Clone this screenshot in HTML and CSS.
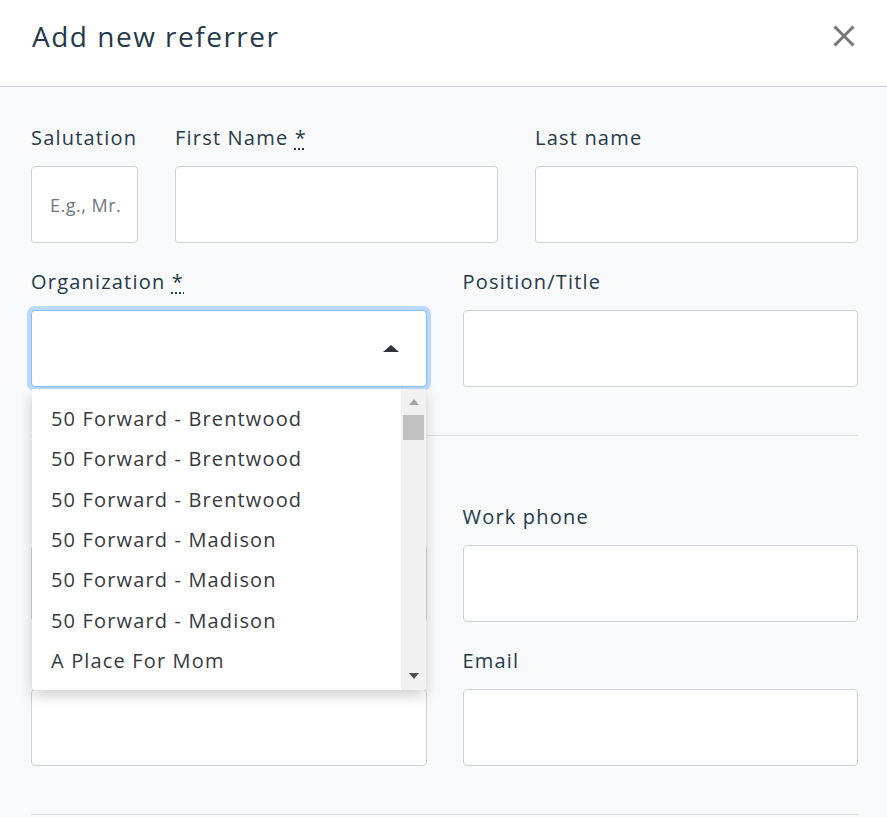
FILE: index.html
```html
<!DOCTYPE html>
<html lang="en">
<head>
    <meta charset="UTF-8">
    <meta name="viewport" content="width=device-width, initial-scale=1.0">
    <title>Add new referrer</title>
    <link rel="stylesheet" href="styles.css">
</head>
<body>
    <div class="modal">
        <header class="modal-header">
            <h1 class="modal-title">Add new referrer</h1>
            <button class="modal-close" type="button" aria-label="Close">
                <svg width="24" height="24" viewBox="0 0 24 24">
                    <path d="M2.5 2.5 L21.5 21.5 M21.5 2.5 L2.5 21.5" stroke="#767676" stroke-width="3" fill="none"/>
                </svg>
            </button>
        </header>

        <form class="modal-body">
            <div class="form-section">
                <div class="form-row row-name">
                    <div class="field">
                        <label>Salutation</label>
                        <div class="input"><span class="placeholder">E.g., Mr.</span></div>
                    </div>
                    <div class="field">
                        <label>First Name <abbr title="required">*</abbr></label>
                        <div class="input"></div>
                    </div>
                    <div class="field">
                        <label>Last name</label>
                        <div class="input"></div>
                    </div>
                </div>

                <div class="form-row row-half">
                    <div class="field">
                        <label>Organization <abbr title="required">*</abbr></label>
                        <div class="select-wrap">
                            <div class="input select is-open">
                                <span class="caret"></span>
                            </div>
                            <div class="dropdown">
                                <ul class="dropdown-list">
                                    <li>50 Forward - Brentwood</li>
                                    <li>50 Forward - Brentwood</li>
                                    <li>50 Forward - Brentwood</li>
                                    <li>50 Forward - Madison</li>
                                    <li>50 Forward - Madison</li>
                                    <li>50 Forward - Madison</li>
                                    <li>A Place For Mom</li>
                                </ul>
                                <div class="scrollbar">
                                    <span class="arrow arrow-up"></span>
                                    <span class="thumb"></span>
                                    <span class="arrow arrow-down"></span>
                                </div>
                            </div>
                        </div>
                    </div>
                    <div class="field">
                        <label>Position/Title</label>
                        <div class="input"></div>
                    </div>
                </div>
            </div>

            <hr class="divider">

            <div class="form-section section-contact">
                <div class="form-row row-half">
                    <div class="field">
                        <label>Mobile phone</label>
                        <div class="input"></div>
                    </div>
                    <div class="field">
                        <label>Work phone</label>
                        <div class="input"></div>
                    </div>
                </div>
                <div class="form-row row-half">
                    <div class="field">
                        <label>Fax</label>
                        <div class="input"></div>
                    </div>
                    <div class="field">
                        <label>Email</label>
                        <div class="input"></div>
                    </div>
                </div>
            </div>

            <hr class="divider">
        </form>
    </div>
</body>
</html>
```

FILE: styles.css
```css
:root {
    --color-text: #263a49;
    --color-item: #363a3e;
    --color-border: #ced2d8;
    --color-divider: #dde0e5;
    --color-bg: #f8f9fb;
    --color-focus: #86bcf7;
}

* {
    box-sizing: border-box;
}

body {
    margin: 0;
    font-family: "Open Sans", "Noto Sans", sans-serif;
    color: var(--color-text);
    background: var(--color-bg);
}

.modal {
    width: 887px;
    min-height: 817px;
    background: var(--color-bg);
}

/* Header */
.modal-header {
    height: 87px;
    display: flex;
    align-items: flex-start;
    justify-content: space-between;
    padding: 14px 31px 0 32px;
    background: #fff;
    border-bottom: 1px solid #c7cad8;
}

.modal-title {
    margin: 0;
    font-size: 28px;
    font-weight: 400;
    line-height: 44px;
    letter-spacing: 1.5px;
    color: var(--color-text);
}

.modal-close {
    margin-top: 10px;
    padding: 0;
    border: none;
    background: none;
    width: 24px;
    height: 24px;
    cursor: pointer;
}

/* Body */
.modal-body {
    padding: 38px 29px 0 31px;
}

.form-section {
    display: flex;
    flex-direction: column;
    gap: 26px;
}

.form-row {
    display: grid;
    column-gap: 36px;
}

.row-name {
    grid-template-columns: 107px 1fr 1fr;
    column-gap: 37px;
}

.row-half {
    grid-template-columns: 1fr 1fr;
}

.field label {
    display: block;
    font-size: 20px;
    line-height: 26px;
    letter-spacing: 1.2px;
    margin-bottom: 15px;
    white-space: nowrap;
}

.field abbr {
    text-decoration: underline dotted;
    text-underline-offset: 3px;
    cursor: help;
}

.input {
    height: 77px;
    background: #fff;
    border: 1px solid var(--color-border);
    border-radius: 4px;
    display: flex;
    align-items: center;
    padding: 0 18px;
}

.placeholder {
    font-size: 18px;
    letter-spacing: 0.5px;
    color: #6f7680;
    white-space: nowrap;
}

.divider {
    margin: 48px 0 0;
    border: none;
    border-top: 1px solid var(--color-divider);
}

.section-contact {
    padding-top: 68px;
}

.section-contact + .divider {
    margin-top: 48px;
}

/* Organization select */
.select-wrap {
    position: relative;
}

.select {
    justify-content: flex-end;
    padding-right: 27px;
}

.select.is-open {
    border-color: var(--color-focus);
    box-shadow: 0 0 0 4px rgba(0, 123, 255, 0.25);
}

.caret {
    width: 0;
    height: 0;
    border-left: 8px solid transparent;
    border-right: 8px solid transparent;
    border-bottom: 7px solid #2f3336;
}

.dropdown {
    position: absolute;
    top: calc(100% + 2px);
    left: 1px;
    right: 1px;
    height: 301px;
    display: flex;
    background: #fff;
    box-shadow: 0 6px 14px rgba(0, 0, 0, 0.18);
    border-radius: 0 0 3px 3px;
    overflow: hidden;
    z-index: 10;
}

.dropdown-list {
    flex: 1;
    list-style: none;
    margin: 0;
    padding: 10px 0 0;
    overflow: hidden;
}

.dropdown-list li {
    height: 40.33px;
    line-height: 40.33px;
    padding-left: 19px;
    font-size: 20px;
    letter-spacing: 1.15px;
    color: var(--color-item);
    white-space: nowrap;
}

.scrollbar {
    position: relative;
    width: 25px;
    background: #f1f1f1;
}

.thumb {
    position: absolute;
    top: 26px;
    left: 2px;
    right: 2px;
    height: 25px;
    background: #c1c1c1;
}

.arrow {
    position: absolute;
    left: 8px;
    width: 0;
    height: 0;
    border-left: 5px solid transparent;
    border-right: 5px solid transparent;
}

.arrow-up {
    top: 10px;
    border-bottom: 6px solid #a3a3a3;
}

.arrow-down {
    bottom: 11px;
    border-top: 6px solid #505050;
}
```
